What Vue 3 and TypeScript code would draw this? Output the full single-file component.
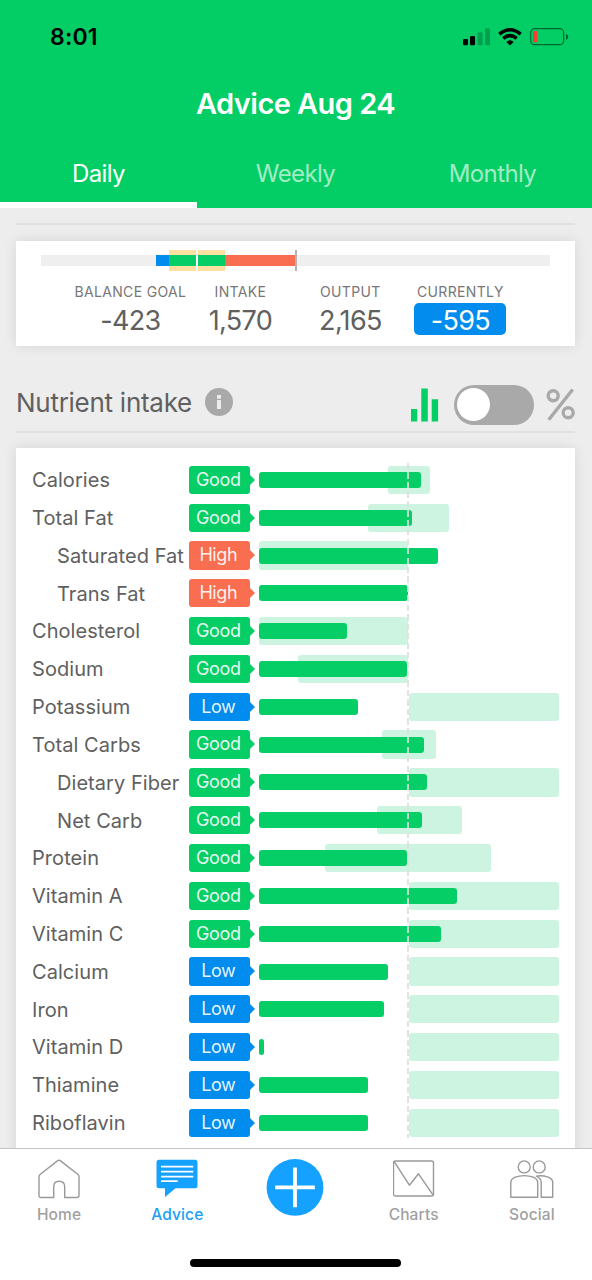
<script setup lang="ts">
type Status = 'Good' | 'High' | 'Low'

interface Nutrient {
  name: string
  status: Status
  amount: number
  range?: [number, number]
  child?: boolean
}

// Chart units: 0 is the left edge of the plot, PLOT is the right edge.
const PLOT = 300.6
const UPPER: [number, number] = [150.4, PLOT]

const nutrients: Nutrient[] = [
  { name: 'Calories', status: 'Good', amount: 162, range: [129.1, 171.5] },
  { name: 'Total Fat', status: 'Good', amount: 153, range: [109.6, 190.8] },
  { name: 'Saturated Fat', status: 'High', amount: 178.8, range: [0, 149.6], child: true },
  { name: 'Trans Fat', status: 'High', amount: 149.8, child: true },
  { name: 'Cholesterol', status: 'Good', amount: 88.6, range: [0, 149.6] },
  { name: 'Sodium', status: 'Good', amount: 148.8, range: [39, 149.6] },
  { name: 'Potassium', status: 'Low', amount: 99.2, range: UPPER },
  { name: 'Total Carbs', status: 'Good', amount: 165.2, range: [123.3, 177.2] },
  { name: 'Dietary Fiber', status: 'Good', amount: 168.3, range: UPPER, child: true },
  { name: 'Net Carb', status: 'Good', amount: 163.4, range: [118.7, 203], child: true },
  { name: 'Protein', status: 'Good', amount: 148.8, range: [66.2, 232.7] },
  { name: 'Vitamin A', status: 'Good', amount: 198.2, range: UPPER },
  { name: 'Vitamin C', status: 'Good', amount: 182, range: UPPER },
  { name: 'Calcium', status: 'Low', amount: 129, range: UPPER },
  { name: 'Iron', status: 'Low', amount: 125, range: UPPER },
  { name: 'Vitamin D', status: 'Low', amount: 5, range: UPPER },
  { name: 'Thiamine', status: 'Low', amount: 109.7, range: UPPER },
  { name: 'Riboflavin', status: 'Low', amount: 109.7, range: UPPER },
]

const tabs = ['Daily', 'Weekly', 'Monthly']
const activeTab = 'Daily'

const balance = [
  { label: 'BALANCE GOAL', value: '-423' },
  { label: 'INTAKE', value: '1,570' },
  { label: 'OUTPUT', value: '2,165' },
  { label: 'CURRENTLY', value: '-595', highlight: true },
]

const pct = (v: number) => `${(v / PLOT) * 100}%`
const rangeStyle = ([from, to]: [number, number]) => ({ left: pct(from), width: pct(to - from) })
</script>

<template>
  <div class="screen">
    <header class="header">
      <div class="status">
        <span class="time">8:01</span>
        <svg class="indicators" width="108" height="22" viewBox="0 0 108 22">
          <rect x="1" y="13" width="5" height="6.3" rx="1.3" />
          <rect x="8" y="10" width="5" height="9.3" rx="1.3" />
          <rect x="15.6" y="6.3" width="5" height="13" rx="1.3" opacity=".22" />
          <rect x="23" y="2.3" width="5" height="17" rx="1.3" opacity=".22" />
          <g fill="none" stroke="#000" stroke-width="3.5">
            <path d="M37.3 8.2 Q48 -0.8 58.7 8.2" />
            <path d="M41.3 12.4 Q48 6.8 54.7 12.4" />
          </g>
          <path d="M44.4 15.9 Q48 12.8 51.6 15.9 L48 19.4 Z" />
          <rect x="68.7" y="2.7" width="33" height="16" rx="4" fill="none" stroke="#000" stroke-opacity=".5" stroke-width="1.2" />
          <rect x="71" y="5" width="4.3" height="11.3" rx="1.3" fill="#ff3b30" />
          <path d="M104 7.7 q2.3 1.2 2.3 3.2 t-2.3 3.2 z" opacity=".5" />
        </svg>
      </div>
      <h1 class="title">Advice Aug 24</h1>
      <nav class="tabs">
        <span v-for="t in tabs" :key="t" class="tab" :class="{ active: t === activeTab }">{{ t }}</span>
      </nav>
    </header>

    <main class="content">
      <hr class="rule" />
      <section class="card balance">
        <div class="meter">
          <div class="target"></div>
          <div class="segment low"></div>
          <div class="segment good"></div>
          <div class="segment high"></div>
          <div class="goal"></div>
          <div class="marker"></div>
        </div>
        <div class="figures">
          <div v-for="b in balance" :key="b.label" class="figure">
            <span class="caption">{{ b.label }}</span>
            <span class="value" :class="{ highlight: b.highlight }">{{ b.value }}</span>
          </div>
        </div>
      </section>

      <div class="section-head">
        <h2>Nutrient intake</h2>
        <svg class="info" width="28" height="28" viewBox="0 0 28 28">
          <circle cx="14" cy="14" r="14" fill="#a9a9a9" />
          <rect x="12" y="7" width="4" height="3.7" rx=".5" fill="#ededed" />
          <rect x="12" y="12" width="4" height="9" rx=".5" fill="#ededed" />
        </svg>
        <svg class="bars-icon" width="28" height="34" viewBox="0 0 28 34">
          <path d="M0 21h6.2v12.5H0zM10.3 .5h6.5v33h-6.5zM20.7 11.3h6.4v22.2h-6.4z" fill="#04ce65" />
        </svg>
        <div class="switch"><span class="knob"></span></div>
        <svg class="percent" width="29" height="33" viewBox="0 0 29 33">
          <g fill="none" stroke="#a9a9a9" stroke-width="3.4">
            <circle cx="7.2" cy="7.7" r="5" />
            <circle cx="22.2" cy="24.7" r="5" />
            <path d="M26.7 1.5 L2.7 31.8" />
          </g>
        </svg>
      </div>
      <hr class="rule" />

      <section class="card nutrients">
        <div v-for="n in nutrients" :key="n.name" class="row">
          <span class="name" :class="{ child: n.child }">{{ n.name }}</span>
          <span class="badge" :class="n.status.toLowerCase()">{{ n.status }}</span>
          <div class="plot">
            <div v-if="n.range" class="range" :style="rangeStyle(n.range)"></div>
            <div class="bar" :style="{ width: pct(n.amount) }"></div>
          </div>
        </div>
        <div class="midline"></div>
      </section>
    </main>

    <footer class="tabbar">
      <div class="items">
        <div class="item">
          <svg width="42" height="40" viewBox="0 0 42 40" class="line">
            <path d="M3 38.5 Q1 38.5 1 36.5 V17.5 Q1 16.3 2 15.5 L19.4 1.9 Q21 .7 22.6 1.9 L40 15.5 Q41 16.3 41 17.5 V36.5 Q41 38.5 39 38.5 H26.7 V28 Q26.7 22.3 21.2 22.3 Q15.7 22.3 15.7 28 V38.5 Z" />
          </svg>
          <span>Home</span>
        </div>
        <div class="item current">
          <svg width="42" height="40" viewBox="0 0 42 40">
            <path d="M3 .7 H39 Q41.5 .7 41.5 3.2 V26.7 Q41.5 29.2 39 29.2 H19.5 L9 38 V29.2 H3 Q.5 29.2 .5 26.7 V3.2 Q.5 .7 3 .7 Z" fill="#14a1ff" />
            <path d="M5 7.7h32.3M5 12.7h32.3M5 17.7h32.3M5 22.2h16.7" stroke="#fff" stroke-width="1.7" fill="none" />
          </svg>
          <span>Advice</span>
        </div>
        <div class="item add">
          <svg width="58" height="58" viewBox="0 0 58 58">
            <circle cx="29" cy="28.4" r="28.4" fill="#14a1ff" />
            <path d="M9.2 28.4h39.6M29 8.6v39.6" stroke="#fff" stroke-width="3.8" fill="none" />
          </svg>
        </div>
        <div class="item">
          <svg width="42" height="40" viewBox="0 0 42 40" class="line">
            <rect x=".5" y="2" width="40" height="35" rx="2" />
            <path d="M1.2 2.7 L16.4 26.2 L25.5 14.8 L39.8 35.7" />
          </svg>
          <span>Charts</span>
        </div>
        <div class="item">
          <svg width="44" height="40" viewBox="0 0 44 40" class="line">
            <circle cx="14.2" cy="7.9" r="6" />
            <circle cx="29.2" cy="7.9" r="6" />
            <path d="M.8 38.2 V23 C2 14.5 26.5 14.5 27.7 23 V38.2 Z" />
            <path d="M26.3 17.1 Q30.8 19 31.2 23 V38.2 H42.7 V23 C42.2 18.5 34.7 16 26.3 17.1 Z" />
          </svg>
          <span>Social</span>
        </div>
      </div>
      <div class="home-indicator"></div>
    </footer>
  </div>
</template>

<style>
html,
body {
  background: #ededed;
}
</style>

<style scoped>
* {
  box-sizing: border-box;
}
.screen {
  height: 1280px;
  overflow: hidden;
  display: flex;
  flex-direction: column;
  background: #ededed;
  font-family: Inter, 'Liberation Sans', sans-serif;
  color: #606060;
}
.header {
  flex: none;
  height: 208px;
  padding-right: 1px;
  background: #02ce65;
  display: flex;
  flex-direction: column;
}
.status {
  height: 72px;
  padding: 2px 21px 0 50px;
  display: flex;
  align-items: center;
  justify-content: space-between;
}
.time {
  font-size: 23px;
  font-weight: 600;
  color: #000;
  letter-spacing: 0.2px;
}
.title {
  margin: 0;
  height: 64px;
  line-height: 64px;
  text-align: center;
  color: #fff;
  font-size: 29px;
  font-weight: 600;
  letter-spacing: -0.55px;
}
.tabs {
  flex: 1;
  display: grid;
  grid-template-columns: repeat(3, 1fr);
}
.tab {
  padding-top: 1px;
  line-height: 74px;
  height: 72px;
  text-align: center;
  font-size: 24px;
  letter-spacing: -0.6px;
  color: rgba(255, 255, 255, 0.65);
}
.tab.active {
  color: #fff;
  box-shadow: inset 0 -6px #fff;
}
.content {
  flex: 1;
  min-height: 0;
  overflow: hidden;
  padding: 15px 17px 0 16px;
}
.rule {
  margin: 0;
  border: 0;
  height: 2px;
  background: #e0e0e2;
}
.card {
  background: #fff;
  box-shadow: 0 0 12px rgba(0, 0, 0, 0.1);
}
.balance {
  margin-top: 16px;
  height: 105px;
  padding: 9px 25px 0;
}
.meter {
  position: relative;
  height: 21px;
  background: linear-gradient(#efefef, #efefef) 0 5px / 100% 11px no-repeat;
}
.meter > div {
  position: absolute;
}
.target {
  left: 127.5px;
  width: 56.5px;
  top: 0;
  height: 21px;
  background: #fee0a3;
}
.segment {
  top: 5px;
  height: 11px;
}
.segment.low {
  left: 115px;
  width: 13px;
  background: #028ced;
}
.segment.good {
  left: 127.5px;
  width: 56.5px;
  background: #04ce65;
}
.segment.high {
  left: 184px;
  width: 70px;
  background: #f96d50;
}
.goal {
  left: 155px;
  width: 2px;
  height: 21px;
  background: #fff;
}
.marker {
  left: 254px;
  width: 2px;
  height: 21px;
  background: #b4b4b4;
}
.figures {
  display: grid;
  grid-template-columns: repeat(4, 110px);
  margin-left: 34.4px;
}
.figure {
  display: flex;
  flex-direction: column;
  align-items: center;
  white-space: nowrap;
}
.caption {
  margin-top: 11px;
  height: 21px;
  line-height: 20px;
  font-size: 14px;
  letter-spacing: 0.35px;
  color: #777;
}
.value {
  width: 92px;
  height: 32px;
  line-height: 35px;
  text-align: center;
  font-size: 27px;
  letter-spacing: -0.7px;
}
.value.highlight {
  color: #fff;
  background: #028ced;
  border-radius: 5px;
}
.section-head {
  height: 85px;
  padding-top: 28px;
  display: flex;
  align-items: center;
}
h2 {
  margin: 0;
  font-size: 26px;
  font-weight: 400;
  line-height: 58px;
  white-space: nowrap;
  letter-spacing: -0.27px;
}
.info {
  margin: -1px 0 0 13px;
}
.bars-icon {
  margin-left: auto;
  margin-top: 4px;
}
.switch {
  margin: 4px 0 0 15px;
  width: 80px;
  height: 40px;
  border-radius: 20px;
  padding: 3.5px 3px;
  background: #a9a9a9;
}
.knob {
  display: block;
  width: 33px;
  height: 33px;
  border-radius: 50%;
  background: #fff;
}
.percent {
  margin: 3px 0 0 12px;
}
.nutrients {
  position: relative;
  margin-top: 15px;
  padding: 13px 15.7px 0 16px;
  height: 760px;
}
.row {
  height: 37.82px;
  display: flex;
  align-items: center;
}
.name {
  flex: none;
  width: 157.4px;
  padding-top: 0.6px;
  font-size: 20px;
  letter-spacing: 0.06px;
  white-space: nowrap;
}
.name.child {
  padding-left: 25px;
}
.badge {
  position: relative;
  flex: none;
  width: 60.3px;
  height: 28.3px;
  line-height: 28.6px;
  margin-right: 9px;
  border-radius: 3px;
  text-align: center;
  font-size: 18px;
  letter-spacing: -0.4px;
  text-indent: -2.5px;
  color: rgba(255, 255, 255, 0.92);
}
.badge::after {
  content: '';
  position: absolute;
  left: 100%;
  top: 9px;
  border: 5px solid transparent;
  border-right-width: 0;
}
.badge.good {
  background: #04ce65;
}
.badge.high {
  background: #f96d50;
}
.badge.low {
  background: #028ced;
}
.badge.good::after {
  border-left-color: #04ce65;
}
.badge.high::after {
  border-left-color: #f96d50;
}
.badge.low::after {
  border-left-color: #028ced;
}
.plot {
  position: relative;
  flex: 1;
  height: 28.3px;
}
.range {
  position: absolute;
  top: 0;
  bottom: 0;
  border-radius: 3px;
  background: #cdf4e0;
}
.bar {
  position: absolute;
  left: 0;
  top: 6.2px;
  height: 16px;
  border-radius: 3px;
  background: #04ce65;
}
.midline {
  position: absolute;
  left: 391px;
  top: 15.3px;
  width: 2px;
  height: 674.5px;
  background: repeating-linear-gradient(rgba(222, 222, 222, 0.85) 0 6.3px, transparent 6.3px 9.455px);
}
.tabbar {
  flex: none;
  height: 132px;
  padding-right: 1px;
  background: #fff;
  border-top: 1px solid #c4c4c4;
  display: flex;
  flex-direction: column;
  align-items: center;
}
.items {
  width: 100%;
  height: 110px;
  display: grid;
  grid-template-columns: repeat(5, 1fr);
}
.item {
  display: flex;
  flex-direction: column;
  align-items: center;
  padding-top: 10px;
  font-size: 15.5px;
  font-weight: 500;
  letter-spacing: 0.15px;
  line-height: 20px;
  color: #a0a0a0;
}
.item span {
  margin-top: 6px;
}
.item.current {
  color: #1c9ff5;
}
.line {
  fill: none;
  stroke: #999;
  stroke-width: 1.4px;
  stroke-linejoin: round;
}
.home-indicator {
  width: 211px;
  height: 8px;
  border-radius: 4px;
  background: #000;
}
</style>
